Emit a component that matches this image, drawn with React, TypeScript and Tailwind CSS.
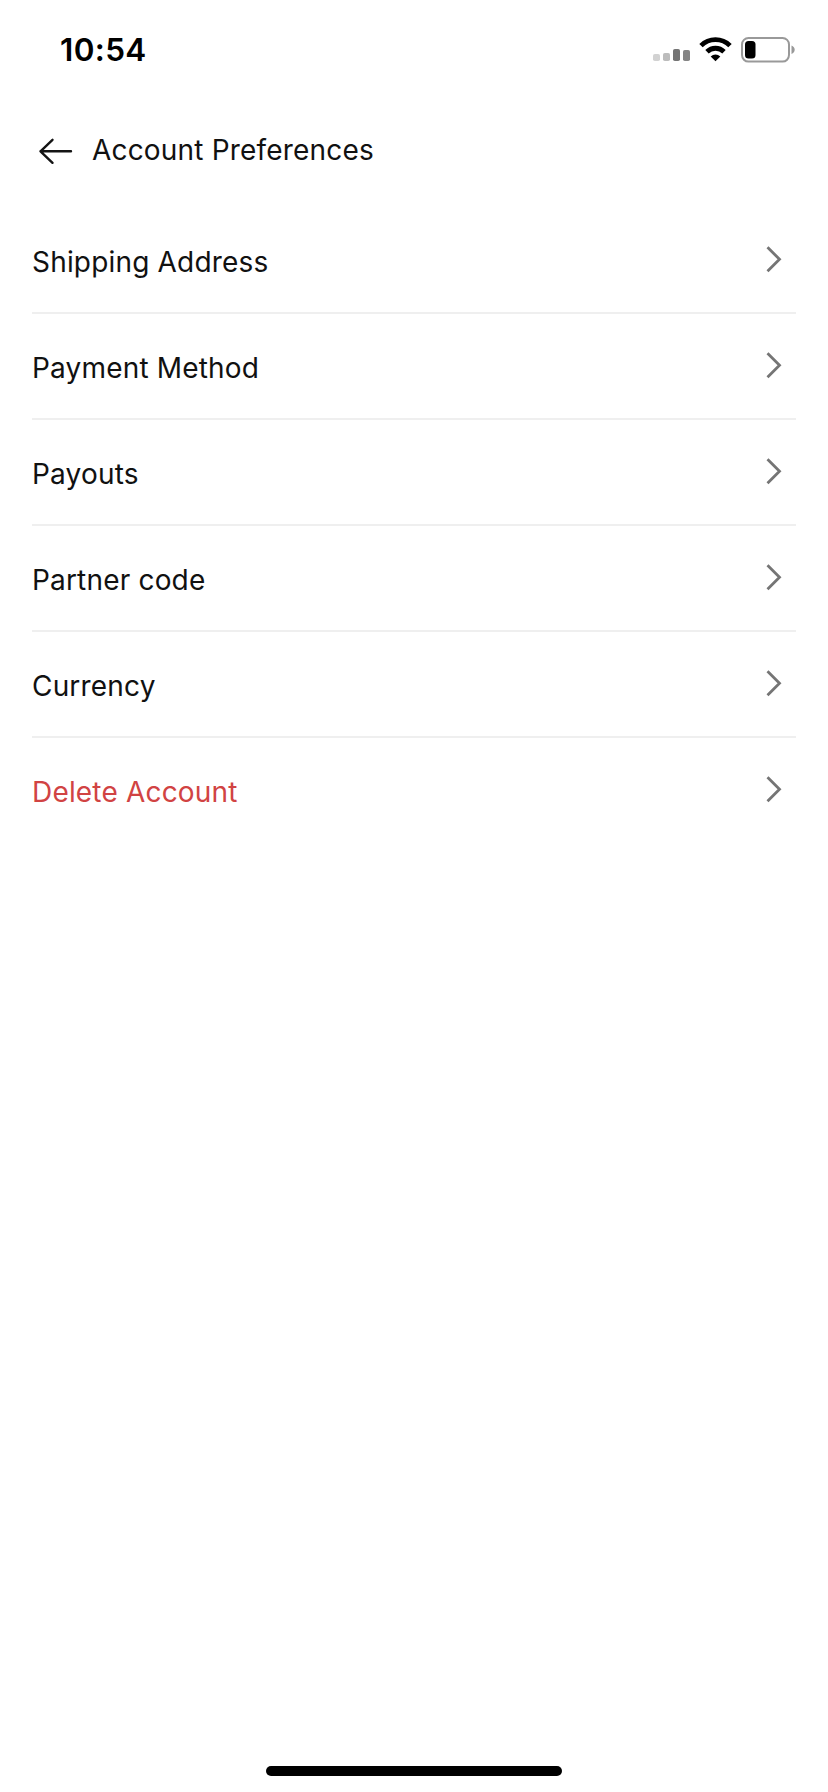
interface PreferenceItem {
  label: string;
  danger?: boolean;
}

const items: PreferenceItem[] = [
  { label: 'Shipping Address' },
  { label: 'Payment Method' },
  { label: 'Payouts' },
  { label: 'Partner code' },
  { label: 'Currency' },
  { label: 'Delete Account', danger: true },
];

function StatusBar() {
  return (
    <header className="flex h-[100px] items-start justify-between pl-[60px] pr-[33px]">
      <span className="mt-[30px] text-[31.5px] font-semibold leading-[40px] tracking-[0.35px] text-black">10:54</span>
      <div className="mt-[36px] flex h-[27px] items-center">
        <svg className="mr-[8px]" width="38" height="27" viewBox="0 0 38 27">
          <rect x="0" y="18" width="7" height="7" rx="1.8" fill="#d2d2d2" />
          <rect x="10" y="17" width="7" height="8" rx="1.8" fill="#bcbcbc" />
          <rect x="20" y="13" width="7" height="12" rx="1.8" fill="#757575" />
          <rect x="30" y="14" width="7" height="11" rx="1.8" fill="#858585" />
        </svg>
        <svg className="mr-[9px]" width="33" height="27" viewBox="0 0 33 27">
          <g fill="none" stroke="#000" strokeWidth="4.8">
            <path d="M2 9.6a20.6 20.6 0 0 1 29 0" />
            <path d="M8 15.8a12 12 0 0 1 17 0" />
          </g>
          <path d="M16.5 25.2l-4.8-4.8a7 7 0 0 1 9.6 0z" fill="#000" />
        </svg>
        <svg width="54" height="27" viewBox="0 0 54 27">
          <rect x="1" y="2" width="47" height="23.6" rx="6.5" fill="none" stroke="#999" strokeWidth="2" />
          <rect x="4" y="5" width="10.5" height="17.5" rx="3.5" fill="#000" />
          <path d="M50.5 9.6c2 .8 3.2 2.4 3.2 4.2s-1.2 3.4-3.2 4.2z" fill="#999" />
        </svg>
      </div>
    </header>
  );
}

function BackArrow() {
  return (
    <svg
      width="36"
      height="30"
      viewBox="0 0 36 30"
      fill="none"
      stroke="#141414"
      strokeWidth="2.4"
      strokeLinecap="round"
      strokeLinejoin="round"
    >
      <path d="M33 15.3H2.5M14.5 3.8L2.5 15.3l12 11.5" />
    </svg>
  );
}

function Chevron() {
  return (
    <svg width="16" height="28" viewBox="0 0 16 28" fill="none" stroke="#757575" strokeWidth="2.8">
      <path d="M1.5 1.3L13.5 13.3L1.5 25.3" />
    </svg>
  );
}

export default function App() {
  return (
    <div className="flex h-[1792px] w-full flex-col bg-white font-['Inter',sans-serif] text-[28px] leading-[36px] tracking-[0.18px] text-[#111]">
      <StatusBar />

      <div className="flex h-[102px] items-center pl-[38px]">
        <button aria-label="Back">
          <BackArrow />
        </button>
        <h1 className="ml-[18px] pb-[2px]">Account Preferences</h1>
      </div>

      <ul className="mx-8 mt-1.5">
        {items.map((item) => (
          <li
            key={item.label}
            className="flex h-[106px] items-center justify-between border-b-2 border-[#efefef] pr-[14px] last:border-transparent"
          >
            <span className={item.danger ? 'pt-[4px] text-[#d14343]' : 'pt-[4px]'}>{item.label}</span>
            <Chevron />
          </li>
        ))}
      </ul>

      <div className="mx-auto mb-4 mt-auto h-[10px] w-[296px] rounded-full bg-black" />
    </div>
  );
}
